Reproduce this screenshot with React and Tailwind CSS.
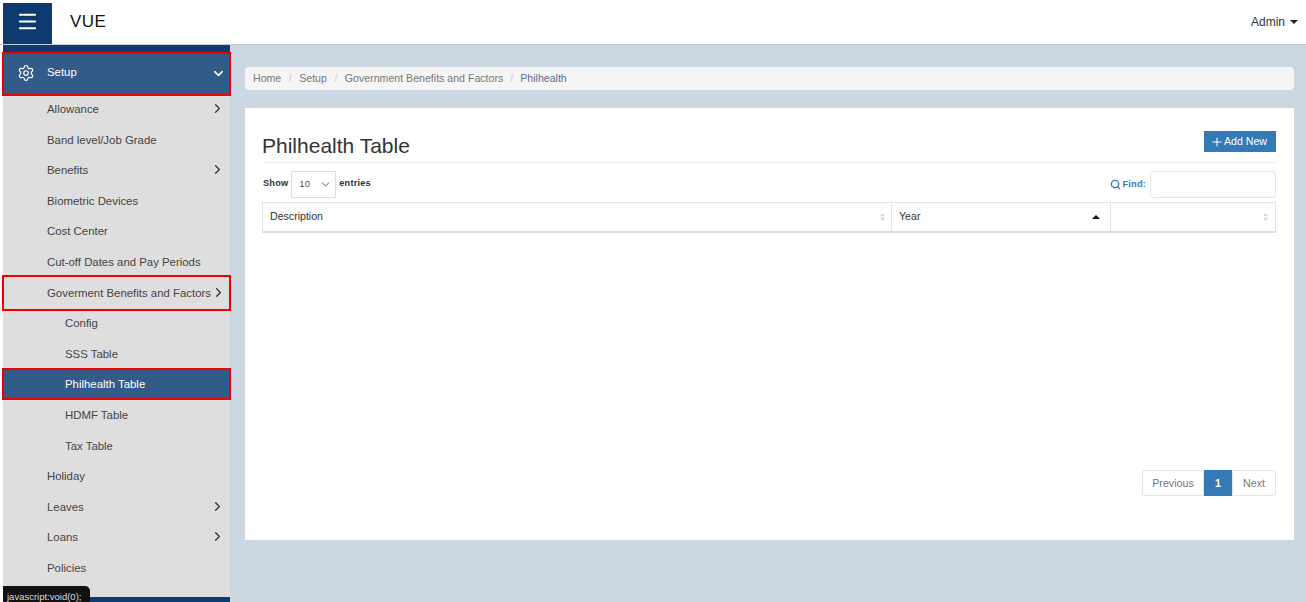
import React from 'react';
import { ChevronDown, ChevronRight, Menu, Plus, Search, Settings } from 'lucide-react';

const menuItems = [
  { label: 'Allowance', arrow: true },
  { label: 'Band level/Job Grade' },
  { label: 'Benefits', arrow: true },
  { label: 'Biometric Devices' },
  { label: 'Cost Center' },
  { label: 'Cut-off Dates and Pay Periods' },
  { label: 'Goverment Benefits and Factors', arrow: true, marked: true },
  { label: 'Config', sub: true },
  { label: 'SSS Table', sub: true },
  { label: 'Philhealth Table', sub: true, active: true },
  { label: 'HDMF Table', sub: true },
  { label: 'Tax Table', sub: true },
  { label: 'Holiday' },
  { label: 'Leaves', arrow: true },
  { label: 'Loans', arrow: true },
  { label: 'Policies' },
];

function SortArrows() {
  return (
    <svg width="5" height="8" viewBox="0 0 6 9" className="text-[#d4d4d4]">
      <path d="M3 0 L6 3.5 H0 Z M3 9 L6 5.5 H0 Z" fill="currentColor" />
    </svg>
  );
}

function MenuRow({ item }) {
  return (
    <div
      className={`relative flex h-[30.6px] items-start justify-between pr-[5px] leading-[26px] whitespace-nowrap ${
        item.sub ? 'pl-[62px]' : 'pl-[44px]'
      } ${item.active ? 'text-white' : 'text-[#444]'}`}
    >
      {item.active && (
        <span className="absolute -top-[3px] bottom-[2px] -left-px -right-px border-2 border-[#f00000] bg-[#335b8a]" />
      )}
      {item.marked && (
        <span className="absolute -top-[5px] -bottom-px -left-px -right-px border-2 border-[#f00000]" />
      )}
      <span className="relative">{item.label}</span>
      {item.arrow && <ChevronRight size={15} strokeWidth={2} className="relative mt-[5px] shrink-0 text-[#333]" />}
    </div>
  );
}

function Sidebar() {
  return (
    <aside className="ml-[3px] flex w-[227px] shrink-0 flex-col bg-[#dedede] text-[11.4px]">
      <div className="h-[7px] shrink-0 bg-[#0d3b70]" />
      <div className="relative flex h-[44px] shrink-0 items-center bg-[#335b8a] pr-[4px] pb-[2px] pl-[14px] text-white">
        <Settings size={18} strokeWidth={1.6} />
        <span className="ml-[12px] flex-1">Setup</span>
        <ChevronDown size={15} strokeWidth={2.4} />
        <span className="absolute inset-y-0 -left-px -right-px border-2 border-[#f00000]" />
      </div>
      <div>
        {menuItems.map((item) => (
          <MenuRow key={item.label} item={item} />
        ))}
      </div>
      <div className="flex-1" />
      <div className="h-[5px] shrink-0 bg-[#0d3b70]" />
    </aside>
  );
}

export default function App() {
  return (
    <div className="relative flex h-[602px] w-[1306px] flex-col overflow-hidden bg-white font-['Liberation_Sans',Arial,sans-serif]">
      {/* Top bar */}
      <header className="flex h-[45px] shrink-0 border-b border-[#c3ccd6] bg-white">
        <button className="mt-[3px] ml-[3px] flex h-[41px] w-[49px] items-center justify-center bg-[#0d3b70] pb-[4px] text-white">
          <Menu size={23} strokeWidth={2} />
        </button>
        <div className="mt-[12px] ml-[18px] text-[17px] leading-[20px] font-medium tracking-[0.5px] text-[#111]">VUE</div>
        <div className="ml-auto flex items-center pr-[8px] text-[12px] text-[#333]">
          Admin
          <span className="ml-[5px] h-0 w-0 border-x-[4px] border-t-[4px] border-x-transparent border-t-[#222]" />
        </div>
      </header>

      <div className="flex flex-1 overflow-hidden">
        <Sidebar />

        <main className="flex flex-1 flex-col bg-[#cdd7e2] pt-[22px] pr-[12px] pl-[15px]">
          {/* Breadcrumb */}
          <nav className="flex h-[23px] items-center rounded-[4px] bg-[#f5f5f5] pl-[8px] text-[10.6px] text-[#777]">
            <span>Home</span>
            <span className="mx-[7.5px] text-[#ccc]">/</span>
            <span>Setup</span>
            <span className="mx-[7.5px] text-[#ccc]">/</span>
            <span>Government Benefits and Factors</span>
            <span className="mx-[7px] text-[#ccc]">/</span>
            <span className="text-[#5f6b8f]">Philhealth</span>
          </nav>

          {/* Card */}
          <section className="mt-[18px] flex h-[432px] flex-col bg-white pt-[23px] pr-[18px] pl-[17px]">
            <div className="flex h-[32px] items-start justify-between border-b border-[#eee]">
              <h1 className="mt-[3px] text-[21px] leading-[24px] text-[#333]">Philhealth Table</h1>
              <button className="flex h-[21px] w-[72px] items-center justify-center bg-[#337ab7] pr-[3px] text-[10.6px] text-white">
                <Plus size={14} strokeWidth={1.8} />
                Add New
              </button>
            </div>

            <div className="mt-[8px] flex h-[27px] items-center justify-between text-[9.2px] font-bold tracking-[0.2px] text-[#333]">
              <div className="flex items-center">
                <span className="mt-[-1px] ml-px">Show</span>
                <div className="mx-[3px] flex h-[27px] w-[45px] items-center justify-between border border-[#ddd] pr-[3px] pl-[7px] text-[9.5px] font-normal text-[#555]">
                  10
                  <ChevronDown size={13} strokeWidth={1.8} />
                </div>
                <span className="mt-[-1px]">entries</span>
              </div>
              <div className="flex items-center text-[#337ab7]">
                <Search size={11} strokeWidth={3} />
                <span className="mr-[4px] ml-[2px]">Find:</span>
                <div className="h-[27px] w-[126px] rounded-[3px] border border-[#e4e4e4]" />
              </div>
            </div>

            {/* Table header */}
            <div className="mt-[4px] grid h-[31px] grid-cols-[628px_219px_1fr] border border-b-2 border-[#e4e4e4] border-b-[#ddd] text-[10.6px] text-[#333]">
              <div className="flex items-center justify-between pr-[6px] pl-[7px]">
                Description
                <SortArrows />
              </div>
              <div className="flex items-center justify-between border-l border-[#e4e4e4] pr-[10px] pl-[7px]">
                Year
                <span className="h-0 w-0 border-x-[4px] border-b-[4px] border-x-transparent border-b-[#111]" />
              </div>
              <div className="flex items-center justify-end border-l border-[#e4e4e4] pr-[7px]">
                <SortArrows />
              </div>
            </div>

            {/* Pagination */}
            <div className="mt-[237px] flex h-[26px] self-end text-[10.7px] text-[#777]">
              <div className="flex w-[62px] items-center justify-center rounded-l-[3px] border border-[#e4e4e4]">Previous</div>
              <div className="flex w-[28px] items-center justify-center bg-[#337ab7] font-bold text-white">1</div>
              <div className="flex w-[44px] items-center justify-center rounded-r-[3px] border border-[#e4e4e4]">Next</div>
            </div>
          </section>
        </main>
      </div>

      {/* Browser status tooltip */}
      <div className="absolute bottom-0 left-[3px] h-[16px] w-[87px] rounded-tr-[5px] bg-[#111] pt-[5px] pl-[4px] text-[9.5px] leading-[12px] whitespace-nowrap text-[#ddd]">
        javascript:void(0);
      </div>
    </div>
  );
}
